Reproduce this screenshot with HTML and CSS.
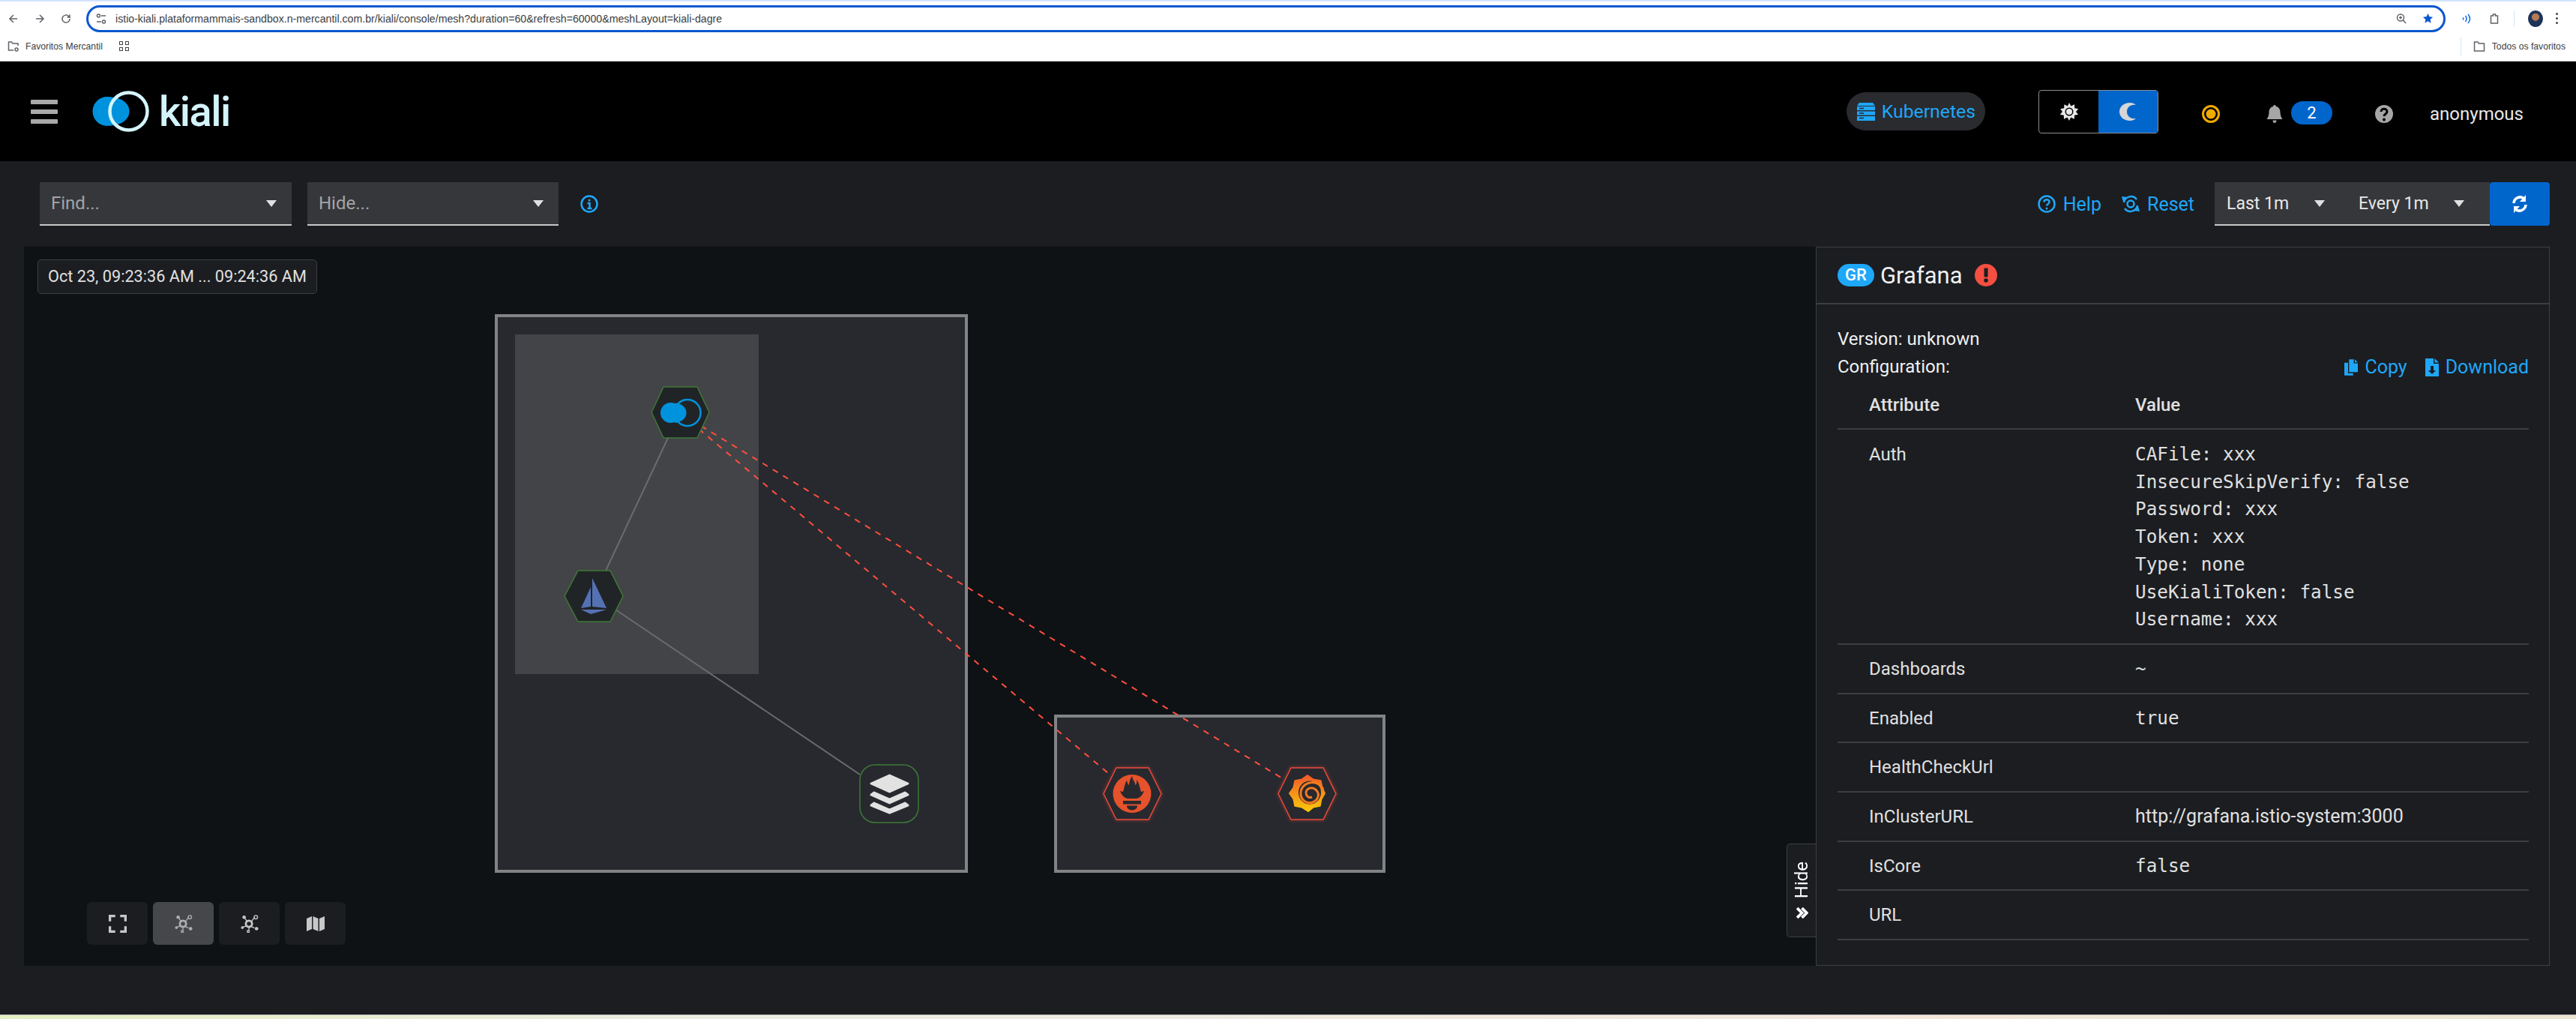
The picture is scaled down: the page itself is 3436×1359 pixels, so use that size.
FILE: index.html
```html
<!DOCTYPE html>
<html lang="en">
<head>
  <meta charset="UTF-8" />
  <title>Kiali Console</title>
  <link rel="stylesheet" href="styles.css">
</head>
<body>

  <!-- browser frame -->
  <div class="browser">
    <div class="omnibar">
      <svg class="nav-icon" viewBox="0 0 16 16"><path d="M13 8H3.500M8 3 3 8l5 5"/></svg>
      <svg class="nav-icon" viewBox="0 0 16 16"><path d="M3 8h9.500M8 3l5 5-5 5"/></svg>
      <svg class="nav-icon" viewBox="0 0 16 16"><path d="M13 8a5 5 0 1 1-1.500-3.500L13 6V2.500M13 6H9.500"/></svg>
      <div class="address">
        <svg class="nav-icon tune" viewBox="0 0 16 16"><circle cx="4.500" cy="4" r="2"/><path d="M8 4h6M2 12h6"/><circle cx="11.500" cy="12" r="2"/></svg>
        <span class="url">istio-kiali.plataformammais-sandbox.n-mercantil.com.br/kiali/console/mesh?duration=60&amp;refresh=60000&amp;meshLayout=kiali-dagre</span>
        <svg class="nav-icon lens" viewBox="0 0 16 16"><circle cx="7" cy="6.500" r="4.500"/><path d="M10.500 10l3.500 4M7 4.500v4M5 6.500h4"/></svg>
        <svg class="star" viewBox="0 0 16 16"><path d="M8 1l2.100 4.700 5 .5-3.800 3.400 1.100 5L8 12l-4.400 2.600 1.100-5L.9 6.200l5-.5z"/></svg>
      </div>
      <svg class="ext-cast" viewBox="0 0 16 16"><path d="M3 6.500q1.500 1.500 0 3M6.500 4q3 4 0 8M10 2q5 6 0 12"/></svg>
      <svg class="nav-icon ext-puzzle" viewBox="0 0 16 16"><path d="M3.500 4h3V2h3v2h3v10h-9z"/></svg>
      <span class="bar-sep"></span>
      <span class="avatar"></span>
      <span class="kebab"><i></i><i></i><i></i></span>
    </div>
    <div class="bookmarks">
      <svg class="nav-icon folder" viewBox="0 0 16 16"><path d="M14 7V4H7L5.500 2H1.500v11H8"/><circle cx="12" cy="12" r="2"/></svg>
      <span class="bm-label">Favoritos Mercantil</span>
      <span class="apps"><i></i><i></i><i></i><i></i></span>
      <span class="bm-sep"></span>
      <svg class="nav-icon folder-plain" viewBox="0 0 16 16"><path d="M1.500 2h4.500L7.500 4H14.500v10h-13z"/></svg>
      <span class="bm-label">Todos os favoritos</span>
    </div>
  </div>

  <!-- kiali masthead -->
  <header class="masthead">
    <div class="burger"><i></i><i></i><i></i></div>
    <div class="brand">
      <svg class="brand-mark" viewBox="122 121 78 55">
        <circle cx="143" cy="148.500" r="19.500" fill="#0093dd"/>
        <path d="M146 129.500C162 129.500 172.500 138 172.500 148.500S162 167.500 146 167.500Z" fill="#0093dd"/>
        <circle cx="171.500" cy="148.500" r="25" fill="none" stroke="#d4f4fb" stroke-width="4.500"/>
      </svg>
      <span class="brand-name">kiali</span>
    </div>

    <div class="cluster-pill">
      <svg class="server-icon" viewBox="0 0 24 24"><path d="M3 0h18l3 4H0zM0 5h24v5H0zM0 11.500h24v5H0zM0 18h24v6H0z"/><path class="cut" d="M3 7.500h6M3 14h6M3 20.500h6"/></svg>
      <span>Kubernetes</span>
    </div>

    <div class="theme-toggle">
      <span class="theme-opt">
        <svg viewBox="0 0 24 24"><path fill="#e8e8e8" d="M12 0l2.400 4.500 4.600-2.200.2 5 5 .9L21 12l3 3.800-5 .9-.2 5-4.600-2.200L12 24l-2.400-4.500-4.600 2.200-.2-5-5-.9L3 12 .200 8.200l5-.9.200-5 4.600 2.200z"/><circle cx="12" cy="12" r="5.500" fill="#000"/><circle cx="12" cy="12" r="4" fill="#e8e8e8"/></svg>
      </span>
      <span class="theme-opt theme-on">
        <svg viewBox="0 0 24 24"><path fill="#d6d6d6" d="M14 0C6 0 0 5 0 12s6 12 14 12c3 0 6-1 8-3-7 1-12-3-12-9s5-10 12-9c-2-2-5-3-8-3z"/></svg>
      </span>
    </div>

    <svg class="status-ring" viewBox="0 0 24 24"><circle cx="12" cy="12" r="10.500" fill="none" stroke="#f0ab00" stroke-width="3"/><circle cx="12" cy="12" r="6.500" fill="#f0ab00"/></svg>

    <svg class="bell" viewBox="0 0 24 24"><path fill="#a6a6a6" d="M12 0c1.200 0 2 1 2 2 4 1 5.500 4 5.500 8 0 4 1.500 7 3 9H1.500c1.500-2 3-5 3-9 0-4 1.500-7 5.500-8 0-1 .8-2 2-2zM9.500 20.500h5c0 2-1 3.500-2.500 3.500s-2.500-1.500-2.500-3.500z"/></svg>
    <span class="count-badge">2</span>

    <svg class="help-round" viewBox="0 0 24 24"><circle cx="12" cy="12" r="12" fill="#a6a6a6"/><path d="M8 9c0-5 8-5 8 0 0 3-4 3-4 6" fill="none" stroke="#000" stroke-width="3"/><circle cx="12" cy="19.500" r="2" fill="#000"/></svg>

    <span class="user-name">anonymous</span>
  </header>

  <!-- find / hide and time controls -->
  <div class="toolbar">
    <div class="select select-find"><span class="placeholder">Find...</span><i class="caret"></i></div>
    <div class="select select-hide"><span class="placeholder">Hide...</span><i class="caret"></i></div>
    <svg class="line-icon info" viewBox="0 0 24 24"><circle cx="12" cy="12" r="10.500"/><path d="M9.500 11H12.500V18M9.500 18h6" /><circle class="dot" cx="12" cy="7" r="1.500"/></svg>

    <a class="tool-link link-help">
      <svg class="line-icon" viewBox="0 0 24 24"><circle cx="12" cy="12" r="10.500"/><path d="M8.500 9.500c0-4.500 7-4.500 7 0 0 2.500-3.500 2.500-3.500 5"/><circle class="dot" cx="12" cy="18" r="1.500"/></svg>
      Help
    </a>
    <a class="tool-link link-reset">
      <svg class="line-icon" viewBox="0 0 24 24"><path d="M3 10a9.500 9.500 0 0 1 17-4M21 14a9.500 9.500 0 0 1-17 4"/><path class="dot" d="M0 2l8 1-6 6zM24 22l-8-1 6-6z"/><circle cx="12" cy="12" r="4.500"/></svg>
      Reset
    </a>
    <div class="time-group">
      <div class="time-select time-last"><span>Last 1m</span><i class="caret"></i></div>
      <div class="time-select time-every"><span>Every 1m</span><i class="caret"></i></div>
      <button class="refresh-btn">
        <svg viewBox="0 0 24 24"><path d="M4 11a8.500 8.500 0 0 1 14-6M20 13a8.500 8.500 0 0 1-14 6" fill="none" stroke="#fff" stroke-width="3.500"/><path fill="#fff" d="M20 0v9h-8zM4 24v-9h8z"/></svg>
      </button>
    </div>
  </div>

  <div class="workspace">
    <section class="graph">
      <svg class="graph-canvas" viewBox="32 329 2390 959">
        <defs>
          <linearGradient id="grafanaFill" x1="0" y1="0" x2="0" y2="1">
            <stop offset="0" stop-color="#f05a28"/>
            <stop offset="1" stop-color="#fbca0a"/>
          </linearGradient>
          <filter id="redGlow" x="-20%" y="-20%" width="140%" height="140%">
            <feGaussianBlur stdDeviation="2"/>
          </filter>
        </defs>

        <rect class="box" x="662" y="421" width="627" height="741"/>
        <rect class="box-inner" x="687" y="446" width="325" height="453"/>
        <rect class="box" x="1408" y="955" width="438" height="207"/>

        <line class="edge" x1="891" y1="584" x2="808" y2="761"/>
        <line class="edge" x1="821" y1="813" x2="1147" y2="1033"/>
        <line class="edge-bad" x1="935" y1="568" x2="1712" y2="1039"/>
        <line class="edge-bad" x1="932" y1="572" x2="1484" y2="1036"/>

        <!-- kiali node -->
        <path class="hex" d="M869 550 885 516H930L946 550 930 584H885Z"/>
        <circle cx="894.500" cy="550.500" r="13.500" fill="#0093dd"/>
        <path d="M900 537.500C909 538 915.500 543 915.500 550.500S909 563 900 564Z" fill="#0093dd"/>
        <circle cx="917" cy="550.500" r="17.500" fill="none" stroke="#0093dd" stroke-width="2.500"/>

        <!-- istio node -->
        <path class="hex" d="M753 795 771 761H814L831 795 814 829H771Z"/>
        <path class="sail" d="M790 771 809 811 790 809ZM788 783V809L775 811ZM775 813H809L788 819Z"/>

        <!-- data plane node -->
        <rect class="node-rect" x="1147" y="1020" width="78" height="77" rx="20"/>
        <path class="layers" d="M1186.500 1034 1211 1045 1186.500 1056 1162 1045Z"/>
        <path class="layers" d="M1166 1057 1186.500 1066 1207 1057 1211 1060 1186.500 1071 1162 1060Z"/>
        <path class="layers" d="M1166 1071 1186.500 1080 1207 1071 1211 1074 1186.500 1084 1162 1074Z"/>

        <!-- prometheus node -->
        <path class="hex-bad glow" d="M1472 1058.500 1489 1024H1532L1549 1058.500 1532 1093H1489Z"/>
        <path class="hex-bad" d="M1472 1058.500 1489 1024H1532L1549 1058.500 1532 1093H1489Z"/>
        <circle cx="1510" cy="1058.500" r="25.500" fill="#e6522c"/>
        <path class="cut-out" d="M1510 1035C1511 1042 1515 1043 1514 1047 1517 1046 1516 1042 1516 1040 1520 1045 1520 1050 1522 1056L1526 1055C1524 1060 1521 1064 1516 1065H1504C1499 1064 1496 1060 1494 1055L1498 1056C1500 1050 1500 1045 1503 1041 1504 1044 1504 1046 1506 1047 1506 1042 1508 1038 1510 1035Z"/>
        <rect class="cut-out" x="1498" y="1068" width="24" height="4.500"/>
        <path class="cut-out" d="M1503 1074.500H1517C1517 1078 1514 1080.500 1510 1080.500S1503 1078 1503 1074.500Z"/>

        <!-- grafana node -->
        <path class="hex-bad glow" d="M1705 1058.500 1722 1024H1765L1782 1058.500 1765 1093H1722Z"/>
        <path class="hex-bad" d="M1705 1058.500 1722 1024H1765L1782 1058.500 1765 1093H1722Z"/>
        <path fill="url(#grafanaFill)" stroke="url(#grafanaFill)" stroke-width="2" stroke-linejoin="round" d="M1744 1034 1751.700 1039.500 1761.700 1041.300 1763.500 1050.400 1767 1058 1762.500 1065.700 1760.700 1074.700 1751.700 1076.500 1745 1082 1736.300 1076.500 1727.300 1074.700 1725.500 1065.700 1720 1058 1725.500 1050.400 1727.300 1041.300 1736.300 1039.500Z"/>
        <ellipse cx="1747" cy="1057" rx="15" ry="15.500" fill="#27292e"/>
        <path d="M1765 1053C1760 1040 1738 1040 1735 1056 1733 1070 1750 1076 1757 1065 1762 1056 1752 1048 1745 1052 1739 1056 1743 1066 1750 1063" fill="none" stroke="#f47a20" stroke-width="3"/>
      </svg>

      <div class="time-range">Oct 23, 09:23:36 AM ... 09:24:36 AM</div>

      <div class="graph-tools">
        <button class="graph-btn">
          <svg viewBox="0 0 22 22"><path class="stroke" d="M1.500 8V1.500H8M14 1.500H20.500V8M20.500 14V20.500H14M8 20.500H1.500V14"/></svg>
        </button>
        <button class="graph-btn graph-btn-on">
          <svg viewBox="0 0 26 26"><circle class="stroke" cx="12" cy="13" r="4.500"/><path class="thin" d="M9 9 6 5M16 9l4-5M8.500 16 3 18M15 17l5 2M12 18v4"/><circle cx="5" cy="3.500" r="2.500"/><circle class="thin" cx="22" cy="3.500" r="2.500"/><circle cx="2.500" cy="18.500" r="2"/><circle cx="23" cy="20" r="2.500"/><circle class="thin" cx="11" cy="24" r="1.500"/></svg>
        </button>
        <button class="graph-btn">
          <svg viewBox="0 0 26 26"><circle class="stroke" cx="12" cy="13" r="4.500"/><path class="thin" d="M9 9 6 5M16 9l4-5M8.500 16 3 18M15 17l5 2M12 18v4"/><circle cx="5" cy="3.500" r="2.500"/><circle class="thin" cx="22" cy="3.500" r="2.500"/><circle cx="2.500" cy="18.500" r="2"/><circle cx="23" cy="20" r="2.500"/><circle class="thin" cx="11" cy="24" r="1.500"/></svg>
        </button>
        <button class="graph-btn">
          <svg viewBox="0 0 24 22"><path d="M0 4 7 1V18L0 21ZM8.500 1 15.500 4V21L8.500 18ZM17 4 24 1V18L17 21Z"/></svg>
        </button>
      </div>
    </section>

    <aside class="panel">
      <div class="hide-tab">
        <span>Hide</span>
        <svg viewBox="0 0 16 16"><path d="M2 2l6 6-6 6M8 2l6 6-6 6"/></svg>
      </div>

      <div class="panel-head">
        <span class="gr-badge">GR</span>
        <span class="panel-title">Grafana</span>
        <svg class="alert-icon" viewBox="0 0 30 30"><circle cx="15" cy="15" r="15" fill="#f54f42"/><rect x="12.500" y="5.500" width="5" height="12" rx="1" fill="#1b1d21"/><circle cx="15" cy="22" r="2.800" fill="#1b1d21"/></svg>
      </div>

      <div class="panel-body">
        <div class="info-line">Version: unknown</div>
        <div class="info-line info-actions">
          <span>Configuration:</span>
          <a class="action action-copy">
            <svg viewBox="0 0 20 24"><path d="M7 0h7v6h6v13H7zM15.500 0 20 4.500H15.500zM0 5h5.500v15.500H13V24H0z"/></svg>
            Copy
          </a>
          <a class="action">
            <svg viewBox="0 0 18 24"><path d="M0 0h11v7h7v17H0z M12.500 0 18 5.500H12.500z"/><path class="arrow" d="M7 10h4v6h3l-5 5-5-5h3z"/></svg>
            Download
          </a>
        </div>

        <table class="attr-table">
          <thead>
            <tr><th>Attribute</th><th>Value</th></tr>
          </thead>
          <tbody>
            <tr class="row-auth">
              <td>Auth</td>
              <td class="mono">CAFile: xxx<br>InsecureSkipVerify: false<br>Password: xxx<br>Token: xxx<br>Type: none<br>UseKialiToken: false<br>Username: xxx</td>
            </tr>
            <tr><td>Dashboards</td><td class="mono">~</td></tr>
            <tr><td>Enabled</td><td class="mono">true</td></tr>
            <tr><td>HealthCheckUrl</td><td></td></tr>
            <tr><td>InClusterURL</td><td class="link-value">http://grafana.istio-system:3000</td></tr>
            <tr><td>IsCore</td><td class="mono">false</td></tr>
            <tr><td>URL</td><td></td></tr>
          </tbody>
        </table>
      </div>
    </aside>
  </div>

  <div class="window-edge"></div>

</body>
</html>
```

FILE: styles.css
```css
:root {
  --bg-page: #1b1d21;
  --bg-graph: #0f1214;
  --bg-select: #36373b;
  --line: #3c3f42;
  --text: #e0e0e0;
  --blue-link: #1fa7f8;
  --blue-btn: #0066cc;
}

* {
  box-sizing: border-box;
}

html, body {
  margin: 0;
  height: 100%;
}

body {
  display: flex;
  flex-direction: column;
  height: 1359px;
  overflow: hidden;
  background: var(--bg-page);
  color: var(--text);
  font-family: Roboto, "Noto Sans", sans-serif;
  font-size: 24px;
}

/* Browser frame */
.browser {
  height: 82px;
  background: #fff;
  border-top: 2px solid #d3e3fd;
  border-bottom: 1px solid #d9d9d9;
  font-family: "Liberation Sans", sans-serif;
  color: #3c4043;
}

.nav-icon {
  width: 16px;
  height: 16px;
  fill: none;
  stroke: #5f6368;
  stroke-width: 1.5;
  flex: none;
}

.omnibar {
  display: flex;
  align-items: center;
  height: 37px;
  margin-top: 4px;
  padding-left: 10px;
  gap: 19px;
}

.address {
  display: flex;
  align-items: center;
  width: 3147px;
  height: 36px;
  padding: 0 13px 0 9px;
  border: 3px solid #0b57d0;
  border-radius: 18px;
  gap: 11px;
}

.url {
  flex: 1;
  font-size: 14.150px;
  white-space: nowrap;
}

.star {
  width: 15px;
  height: 15px;
  margin-left: 9px;
  fill: #0b57d0;
}

.ext-cast {
  width: 16px;
  height: 16px;
  margin-left: 1px;
  fill: none;
  stroke: #1a73e8;
  stroke-width: 1.6;
}

.ext-puzzle {
  margin-left: 2px;
}

.bar-sep {
  width: 1px;
  height: 22px;
  background: #d3e3fd;
  margin: 0 -1px;
}

.avatar {
  width: 20px;
  height: 22px;
  border-radius: 50%;
  background: radial-gradient(circle at 50% 40%, #b57a56 0 28%, #1f3358 32%);
}

.kebab {
  display: flex;
  flex-direction: column;
  gap: 3px;
  margin-left: -2px;
}

.kebab i {
  width: 3px;
  height: 3px;
  border-radius: 50%;
  background: #444;
}

.bookmarks {
  display: flex;
  align-items: center;
  height: 37px;
  padding-left: 10px;
  font-size: 12.200px;
}

.folder {
  margin-right: 8px;
}

.apps {
  display: grid;
  grid-template-columns: 5px 5px;
  gap: 3px;
  margin-left: 22px;
}

.apps i {
  width: 5px;
  height: 5px;
  border: 1px solid #444;
}

.bm-sep {
  width: 1px;
  height: 24px;
  margin-left: auto;
  background: #d3e3fd;
}

.folder-plain {
  margin: 0 9px 0 16px;
}

.bookmarks .bm-label:last-child {
  margin-right: 14px;
}

/* Masthead */
.masthead {
  display: flex;
  align-items: center;
  height: 133px;
  padding: 0 70px 0 41px;
  background: #000;
}

.burger {
  display: flex;
  flex-direction: column;
  gap: 7px;
  width: 36px;
}

.burger i {
  height: 6px;
  background: #a9a9a9;
  border-radius: 1px;
}

.brand {
  display: flex;
  align-items: center;
  gap: 12px;
  margin-left: 45px;
}

.brand-mark {
  width: 78px;
  height: 55px;
}

.brand-name {
  font-size: 56px;
  font-weight: 500;
  line-height: 1;
  color: #d4f4fb;
  letter-spacing: -1.500px;
}

.cluster-pill {
  display: flex;
  align-items: center;
  gap: 9px;
  height: 51px;
  margin-left: auto;
  padding: 0 13px 0 14px;
  border-radius: 26px;
  background: #292b2f;
  color: var(--blue-link);
  font-size: 24.800px;
}

.server-icon {
  width: 24px;
  height: 24px;
  fill: var(--blue-link);
}

.server-icon .cut {
  fill: none;
  stroke: #292b2f;
  stroke-width: 1.500;
}

.theme-toggle {
  display: flex;
  width: 160px;
  height: 58px;
  margin-left: 71px;
  border: 1px solid #8a8d90;
  border-radius: 4px;
  overflow: hidden;
}

.theme-opt {
  flex: 1;
  display: flex;
  align-items: center;
  justify-content: center;
}

.theme-opt svg {
  width: 24px;
  height: 24px;
}

.theme-on {
  background: var(--blue-btn);
}

.status-ring {
  width: 24px;
  height: 24px;
  margin: 6px 0 0 58px;
}

.bell {
  width: 24px;
  height: 24px;
  margin: 6px 0 0 61px;
}

.count-badge {
  width: 55px;
  height: 31px;
  margin: 3px 0 0 10px;
  border-radius: 16px;
  background: var(--blue-btn);
  color: #fff;
  font-size: 22px;
  line-height: 31px;
  text-align: center;
}

.help-round {
  width: 24px;
  height: 24px;
  margin: 6px 0 0 57px;
}

.user-name {
  margin: 6px 0 0 49px;
  color: #e8e8e8;
}

/* Toolbar */
.toolbar {
  display: flex;
  align-items: center;
  height: 114px;
  padding: 0 35px 0 53px;
}

.select {
  display: flex;
  align-items: center;
  justify-content: space-between;
  height: 58px;
  padding: 0 20px 0 15px;
  background: var(--bg-select);
  border-bottom: 2px solid #c7c7c7;
}

.select-find {
  width: 336px;
}

.select-hide {
  width: 335px;
  margin-left: 21px;
}

.placeholder {
  color: #a3a5a8;
}

.caret {
  width: 0;
  height: 0;
  border-left: 7px solid transparent;
  border-right: 7px solid transparent;
  border-top: 9px solid #e0e0e0;
}

.line-icon {
  width: 24px;
  height: 24px;
  fill: none;
  stroke: var(--blue-link);
  stroke-width: 2.500;
}

.line-icon .dot {
  fill: var(--blue-link);
  stroke: none;
}

.info {
  margin-left: 29px;
}

.tool-link {
  display: flex;
  align-items: center;
  gap: 10px;
  color: var(--blue-link);
  font-size: 25px;
}

.link-help {
  margin-left: auto;
}

.link-reset {
  margin-left: 27px;
}

.time-group {
  display: flex;
  align-items: stretch;
  height: 58px;
  margin-left: 27px;
}

.time-select {
  display: flex;
  align-items: center;
  justify-content: space-between;
  background: var(--bg-select);
  border-bottom: 2px solid #c7c7c7;
  color: #e8e8e8;
  font-size: 23px;
}

.time-last {
  width: 176px;
  padding: 0 29px 0 16px;
}

.time-every {
  width: 191px;
  padding: 0 34px 0 16px;
}

.refresh-btn {
  display: flex;
  align-items: center;
  justify-content: center;
  width: 80px;
  padding: 0;
  border: 0;
  border-radius: 4px;
  background: var(--blue-btn);
}

.refresh-btn svg {
  width: 24px;
  height: 24px;
}

/* Graph and side panel */
.workspace {
  display: flex;
  height: 959px;
  margin-left: 32px;
  width: 3369px;
}

.graph {
  position: relative;
  width: 2390px;
  background: var(--bg-graph);
}

.graph-canvas {
  display: block;
  width: 100%;
  height: 100%;
}

.box {
  fill: #27292e;
  stroke: #828385;
  stroke-width: 4;
}

.box-inner {
  fill: #434447;
}

.edge {
  stroke: #6a6b6e;
  stroke-width: 2;
}

.edge-bad {
  stroke: #ff4f3f;
  stroke-width: 2;
  stroke-dasharray: 8 8;
}

.hex {
  fill: #212427;
  stroke: #3e7a37;
  stroke-width: 1.500;
  stroke-linejoin: round;
}

.hex-bad {
  fill: #27292e;
  stroke: #ee4a3c;
  stroke-width: 1.500;
  stroke-linejoin: round;
}

.glow {
  fill: none;
  stroke-width: 3;
  opacity: 0.4;
  filter: url(#redGlow);
}

.sail {
  fill: #5472b3;
}

.node-rect {
  fill: #27292e;
  stroke: #3e7a37;
  stroke-width: 1.500;
}

.layers {
  fill: #e2e2e2;
  stroke: #e2e2e2;
  stroke-width: 3;
  stroke-linejoin: round;
}

.cut-out {
  fill: #27292e;
}

.time-range {
  position: absolute;
  left: 18px;
  top: 17px;
  height: 46px;
  padding: 0 13px;
  border: 1px solid var(--line);
  border-radius: 5px;
  background: var(--bg-page);
  font-size: 21.700px;
  line-height: 44px;
  white-space: nowrap;
}

.graph-tools {
  position: absolute;
  left: 84px;
  top: 874px;
  display: flex;
  gap: 7px;
}

.graph-btn {
  display: flex;
  align-items: center;
  justify-content: center;
  width: 81px;
  height: 57px;
  padding: 0;
  border: 0;
  border-radius: 6px;
  background: var(--bg-page);
}

.graph-btn svg {
  width: 24px;
  height: 24px;
  fill: #c8c8c8;
}

.graph-btn .stroke {
  fill: none;
  stroke: #c8c8c8;
  stroke-width: 3;
}

.graph-btn .thin {
  fill: none;
  stroke: #c8c8c8;
  stroke-width: 1.500;
}

.graph-btn-on {
  background: #46474b;
}

.graph-btn-on svg {
  opacity: 0.8;
}

.panel {
  position: relative;
  flex: 1;
  border: 1px solid var(--line);
  background: var(--bg-page);
}

.hide-tab {
  position: absolute;
  left: -40px;
  top: 795px;
  display: flex;
  align-items: center;
  justify-content: center;
  gap: 10px;
  flex-direction: column;
  width: 39px;
  height: 125px;
  border: 1px solid var(--line);
  border-right: 0;
  border-radius: 5px 0 0 5px;
  background: var(--bg-page);
  color: #fff;
  font-size: 24px;
}

.hide-tab span {
  writing-mode: vertical-rl;
  transform: rotate(180deg);
  line-height: 1;
}

.hide-tab svg {
  width: 17px;
  height: 17px;
  fill: none;
  stroke: #fff;
  stroke-width: 3.500;
}

.panel-head {
  display: flex;
  align-items: center;
  height: 76px;
  padding-left: 28px;
  border-bottom: 2px solid var(--line);
}

.gr-badge {
  width: 49px;
  height: 30px;
  border-radius: 15px;
  background: var(--blue-link);
  color: #fff;
  font-size: 22px;
  font-weight: 500;
  line-height: 30px;
  text-align: center;
}

.panel-title {
  margin-left: 8px;
  color: #f0f0f0;
  font-size: 31px;
}

.alert-icon {
  width: 30px;
  height: 30px;
  margin-left: 16px;
}

.panel-body {
  padding: 28px 27px 0 28px;
}

.info-line {
  height: 37px;
  line-height: 37px;
  color: #f0f0f0;
}

.info-actions {
  display: flex;
}

.action {
  display: flex;
  align-items: center;
  gap: 9px;
  color: var(--blue-link);
  font-size: 25px;
}

.action svg {
  width: 18px;
  height: 24px;
  fill: var(--blue-link);
}

.action .arrow {
  fill: var(--bg-page);
}

.action-copy {
  margin-left: auto;
  margin-right: 24px;
}

.attr-table {
  width: 922px;
  border-collapse: collapse;
  table-layout: fixed;
}

.attr-table th {
  height: 64px;
  font-weight: 500;
  text-align: left;
  padding: 0;
  border-bottom: 2px solid var(--line);
}

.attr-table td {
  height: 65.700px;
  padding: 0;
  border-bottom: 2px solid var(--line);
}

.attr-table th:first-child,
.attr-table td:first-child {
  width: 397px;
  padding-left: 42px;
}

.row-auth td {
  vertical-align: top;
  padding-top: 15px;
  height: 287px;
  line-height: 36.700px;
}

.mono {
  font-family: "DejaVu Sans Mono", monospace;
  font-size: 24.300px;
}

.link-value {
  font-size: 25px;
}

.window-edge {
  height: 6px;
  margin-top: auto;
  border-top: 1px solid #bdbdbd;
  background: linear-gradient(90deg, #e4efc0, #ecece4 30%, #f2e8dc 70%, #ece6d0);
}
```
